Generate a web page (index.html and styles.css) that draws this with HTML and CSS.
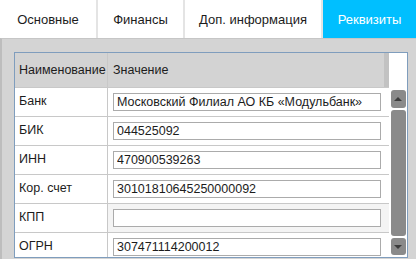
FILE: index.html
```html
<!DOCTYPE html>
<html lang="ru">
<head>
    <meta charset="UTF-8">
    <title>Реквизиты</title>
    <link rel="stylesheet" href="styles.css">
</head>
<body>

<div class="tabs">
    <div class="tab tab-main">Основные</div>
    <div class="tab tab-fin">Финансы</div>
    <div class="tab tab-info">Доп. информация</div>
    <div class="tab tab-req active">Реквизиты</div>
</div>

<div class="panel">
    <div class="grid">
        <div class="table">
            <div class="head">
                <div class="cell name">Наименование</div>
                <div class="cell value">Значение</div>
                <div class="filler"></div>
            </div>
            <div class="row">
                <div class="cell name">Банк</div>
                <div class="cell value"><input type="text" value="Московский Филиал АО КБ «Модульбанк»"></div>
            </div>
            <div class="row">
                <div class="cell name">БИК</div>
                <div class="cell value"><input type="text" value="044525092"></div>
            </div>
            <div class="row">
                <div class="cell name">ИНН</div>
                <div class="cell value"><input type="text" value="470900539263"></div>
            </div>
            <div class="row">
                <div class="cell name">Кор. счет</div>
                <div class="cell value"><input type="text" value="30101810645250000092"></div>
            </div>
            <div class="row alt">
                <div class="cell name">КПП</div>
                <div class="cell value"><input type="text" value=""></div>
            </div>
            <div class="row">
                <div class="cell name">ОГРН</div>
                <div class="cell value"><input type="text" value="307471114200012"></div>
            </div>
        </div>
        <div class="scrollbar">
            <div class="sb-head"></div>
            <div class="sb-btn sb-up"><span class="arrow-up"></span></div>
            <div class="sb-thumb"></div>
            <div class="sb-btn sb-down"><span class="arrow-down"></span></div>
        </div>
    </div>
</div>

</body>
</html>
```

FILE: styles.css
```css
/* Page */
body {
    margin: 0;
    width: 416px;
    height: 259px;
    overflow: hidden;
    background-color: #d4d4d4;
    font-family: "Liberation Sans", Arial, sans-serif;
    color: #1c1c1c;
}

/* Tab bar */
.tabs {
    display: flex;
    height: 38px;
    background-color: #fff;
}
.tab {
    display: flex;
    align-items: center;
    justify-content: center;
    font-size: 13px;
    border-right: 2px solid #e4e4e4;
    box-sizing: border-box;
}
.tab-main { width: 98px; }
.tab-fin { width: 87px; }
.tab-info { width: 138px; }
.tab-req { width: 93px; border-right: none; }
.tab.active {
    background-color: #00bfff;
    color: #fff;
}

/* Gray panel under tabs */
.panel {
    height: 221px;
    box-sizing: border-box;
    border-top: 1px solid #c6c6c6;
    border-left: 2px solid #bdbdbd;
    padding: 13px 0 0 12px;
    background-color: #d4d4d4;
}

/* Data grid */
.grid {
    display: flex;
    width: 394px;
    height: 206px;
    box-sizing: border-box;
    border: 1px solid #7f9dbd;
    background-color: #fff;
    overflow: hidden;
}
.table {
    width: 374px;
    font-size: 12.5px;
}
.head {
    display: flex;
    height: 35px;
    box-sizing: border-box;
    border-bottom: 1px solid #c8c8c8;
    background-color: #d3d3d3;
}
.head .cell {
    display: flex;
    align-items: center;
}
.head .filler {
    width: 5px;
    background-color: #c2c2c2;
}
.row {
    display: flex;
    height: 29px;
    box-sizing: border-box;
    border-bottom: 1px solid #c8c8c8;
}
.row.alt .value {
    background-color: #f4f4f4;
}
.cell.name {
    width: 93px;
    box-sizing: border-box;
    padding-left: 4px;
    border-right: 1px solid #c8c8c8;
}
.row .cell.name {
    padding-top: 6px;
}
.cell.value {
    flex: 1;
    padding-left: 5px;
}
.head .cell.value {
    flex: none;
    width: 276px;
    box-sizing: border-box;
}
.row input {
    display: block;
    width: 268px;
    height: 18px;
    margin-top: 5px;
    box-sizing: border-box;
    padding: 0 3px;
    border: 1px solid #ababab;
    background-color: #fff;
    font-family: "Liberation Sans", Arial, sans-serif;
    font-size: 12.5px;
    color: #1c1c1c;
}

/* Vertical scrollbar */
.scrollbar {
    width: 18px;
    display: flex;
    flex-direction: column;
    align-items: center;
    background-color: #fff;
}
.sb-head {
    height: 36px;
    flex: none;
}
.sb-btn {
    width: 15px;
    height: 18px;
    flex: none;
    display: flex;
    align-items: center;
    justify-content: center;
    border-radius: 3px;
    background-color: #8a8a8a;
}
.sb-up { margin-top: 1px; }
.sb-down { margin-top: 2px; height: 17px; }
.sb-thumb {
    width: 15px;
    height: 126px;
    flex: none;
    margin-top: 2px;
    border-radius: 3px;
    background-color: #8a8a8a;
}
.arrow-up {
    width: 0;
    height: 0;
    border-left: 4px solid transparent;
    border-right: 4px solid transparent;
    border-bottom: 4px solid #3c3c3c;
}
.arrow-down {
    width: 0;
    height: 0;
    border-left: 4px solid transparent;
    border-right: 4px solid transparent;
    border-top: 4px solid #3c3c3c;
}
```
